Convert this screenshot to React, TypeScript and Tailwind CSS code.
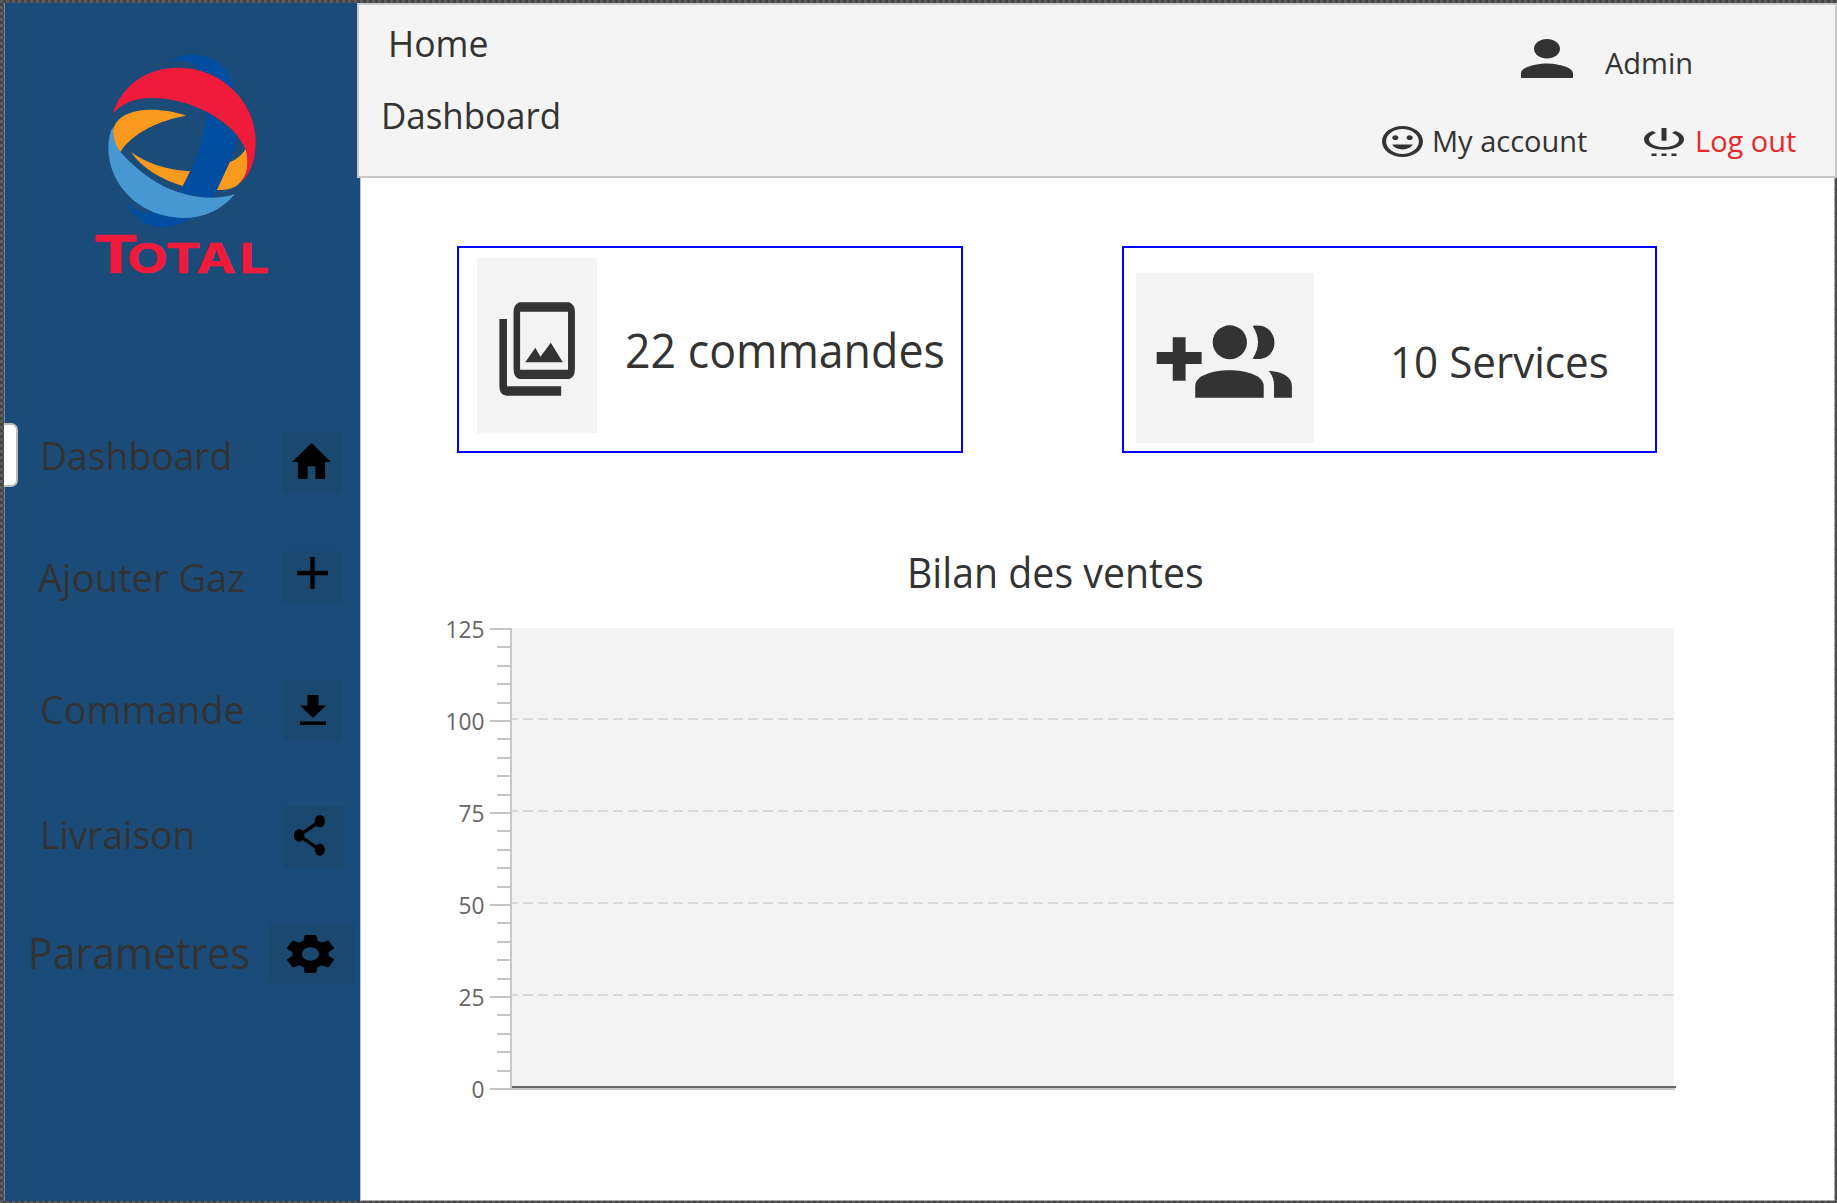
import React from "react";

type IconProps = { d: string; viewBox: string; className: string };

function Icon({ d, viewBox, className }: IconProps) {
  return (
    <svg viewBox={viewBox} preserveAspectRatio="none" className={className} fill="currentColor">
      <path d={d} />
    </svg>
  );
}

const HOME = "M10 20v-6h4v6h5v-8h3L12 3 2 12h3v8z";
const ADD = "M19 13h-6v6h-2v-6H5v-2h6V5h2v6h6v2z";
const DOWNLOAD = "M19 9h-4V3H9v6H5l7 7 7-7zM5 18v2h14v-2H5z";
const SHARE =
  "M18 16.08c-.76 0-1.44.3-1.96.77L8.91 12.7c.05-.23.09-.46.09-.7s-.04-.47-.09-.7l7.05-4.11c.54.5 1.25.81 2.04.81 1.66 0 3-1.34 3-3s-1.34-3-3-3-3 1.34-3 3c0 .24.04.47.09.7L8.04 9.81C7.5 9.31 6.79 9 6 9c-1.66 0-3 1.34-3 3s1.34 3 3 3c.79 0 1.5-.31 2.04-.81l7.12 4.16c-.05.21-.08.43-.08.65 0 1.61 1.31 2.92 2.92 2.92s2.92-1.31 2.92-2.92-1.31-2.92-2.92-2.92z";
const SETTINGS =
  "M19.43 12.98c.04-.32.07-.64.07-.98s-.03-.66-.07-.98l2.11-1.65c.19-.15.24-.42.12-.64l-2-3.46c-.12-.22-.39-.3-.61-.22l-2.49 1c-.52-.4-1.08-.73-1.69-.98l-.38-2.65C14.46 2.18 14.25 2 14 2h-4c-.25 0-.46.18-.49.42l-.38 2.65c-.61.25-1.17.59-1.69.98l-2.49-1c-.23-.09-.49 0-.61.22l-2 3.46c-.13.22-.07.49.12.64l2.11 1.65c-.04.32-.07.65-.07.98s.03.66.07.98l-2.11 1.65c-.19.15-.24.42-.12.64l2 3.46c.12.22.39.3.61.22l2.49-1c.52.4 1.08.73 1.69.98l.38 2.65c.03.24.24.42.49.42h4c.25 0 .46-.18.49-.42l.38-2.65c.61-.25 1.17-.59 1.69-.98l2.49 1c.23.09.49 0 .61-.22l2-3.46c.12-.22.07-.49-.12-.64l-2.11-1.65zM12 15.5c-1.93 0-3.5-1.57-3.5-3.5s1.57-3.5 3.5-3.5 3.5 1.57 3.5 3.5-1.57 3.5-3.5 3.5z";
const PERSON = "M12 12c2.21 0 4-1.79 4-4s-1.79-4-4-4-4 1.79-4 4 1.79 4 4 4zm0 2c-2.67 0-8 1.34-8 4v2h16v-2c0-2.66-5.33-4-8-4z";
const POWER =
  "M7 24h2v-2H7v2zm4 0h2v-2h-2v2zm4 0h2v-2h-2v2zM13 2h-2v10h2V2zm3.56 2.44l-1.45 1.45C16.84 6.94 18 8.83 18 11c0 3.31-2.69 6-6 6s-6-2.69-6-6c0-2.17 1.16-4.06 2.88-5.12L7.44 4.44C5.36 5.88 4 8.28 4 11c0 4.42 3.58 8 8 8s8-3.58 8-8c0-2.72-1.36-5.12-3.44-6.56z";
const SMILE =
  "M11.99 2C6.47 2 2 6.48 2 12s4.47 10 9.99 10C17.52 22 22 17.52 22 12S17.52 2 11.99 2zM12 20c-4.42 0-8-3.58-8-8s3.58-8 8-8 8 3.58 8 8-3.58 8-8 8zm3.5-9c.83 0 1.5-.67 1.5-1.5S16.33 8 15.5 8 14 8.67 14 9.5s.67 1.5 1.5 1.5zm-7 0c.83 0 1.5-.67 1.5-1.5S9.33 8 8.5 8 7 8.67 7 9.5 7.67 11 8.5 11zm-1.5 3c.78 2.04 2.75 3.1 5 3.1s4.22-1.06 5-3.1H7z";

function Logo() {
  return (
    <svg viewBox="0 0 600 750" className="h-[250px] w-[200px]" fontFamily="Inter, sans-serif" fontWeight="700">
      <g fill="#004ea2">
        <path d="M265 65C300 38 365 38 402 60C440 82 455 115 462 150L360 90C340 62 300 55 265 65z" />
        <path d="M141 484C160 515 185 520 220 518L332 534C290 566 230 570 190 546C160 528 146 508 141 484z" />
      </g>
      <path
        fill="#f9991d"
        d="M121 336C90 300 88 255 130 228C180 200 260 207 318 227C240 240 155 280 121 336zM153 336C195 368 260 390 330 394L308 438C250 420 190 390 153 336zM410 450L449 366C470 358 488 343 497 326C512 370 500 420 465 440C450 448 430 450 410 450z"
      />
      <path fill="#004ea2" d="M380 215C372 300 338 400 296 458L400 475C412 445 450 365 449 366C460 340 468 312 470 285z" />
      <path
        fill="#f01a3b"
        d="M98 222C122 145 190 83 295 83C425 83 527 185 527 305C527 365 508 410 478 430C502 410 507 372 498 330C480 290 450 252 380 215C330 190 290 180 250 176C190 170 135 178 98 222z"
      />
      <path
        fill="#4797d3"
        d="M98 260C100 295 106 315 121 336C180 400 240 440 296 457C350 474 410 480 465 462C425 510 370 534 312 534C185 534 85 440 85 322C85 300 90 277 98 260z"
      />
      <text
        transform="translate(0 699) scale(1.3 1)"
        x="31 109 198 269 368"
        fill="#f01a3b"
        stroke="#f01a3b"
        strokeWidth="2"
        strokeLinejoin="round"
        fontSize="121"
      >
        <tspan fontSize="156">T</tspan>OTAL
      </text>
    </svg>
  );
}

const NAV = [
  { label: "Dashboard", d: HOME, vb: "2 3 20 17", icon: "h-[36px] w-[39px] mt-[10px] ml-[10px]", row: "h-[60px] pl-[36px]", text: "w-[242px] pt-[2px] text-[39px]", fit: "scale-x-[0.956]", tile: "w-[60px]" },
  { label: "Ajouter Gaz", d: ADD, vb: "5 5 14 14", icon: "h-[32px] w-[31px] mt-[6px] ml-[15px]", row: "mt-[58px] h-[52px] pl-[34px]", text: "w-[244px] pt-[6px] text-[39px]", fit: "scale-x-[0.977]", tile: "w-[60px]" },
  { label: "Commande", d: DOWNLOAD, vb: "5 3 14 17", icon: "h-[30px] w-[26px] mt-[14px] ml-[16px]", row: "mt-[78px] h-[60px] pl-[36px]", text: "w-[244px] pt-[8px] text-[39px]", fit: "scale-x-[0.968]", tile: "w-[58px]" },
  { label: "Livraison", d: SHARE, vb: "3 2 18 20", icon: "h-[41px] w-[31px] mt-[9px] ml-[10px]", row: "mt-[65px] h-[62px] pl-[36px]", text: "w-[244px] pt-[8px] text-[39px]", fit: "scale-x-[0.952]", tile: "w-[60px]" },
  { label: "Parametres", d: SETTINGS, vb: "2.27 2 19.46 20", icon: "h-[38px] w-[47px] mt-[12px] ml-[18px]", row: "mt-[55px] h-[60px] pl-[24px]", text: "w-[241px] pt-[7px] text-[44px]", fit: "scale-x-[0.932]", tile: "w-[85px]" },
];

function Sidebar() {
  return (
    <aside className="relative flex w-[357px] shrink-0 flex-col border-r border-[#b9c6d3] bg-[#1b4b79] shadow-[inset_1px_0_0_#6b86a0]">
      <div className="mt-[37px] ml-[76px] h-[250px]">
        <Logo />
      </div>
      <nav className="mt-[143px]">
        {NAV.map((n) => (
          <div key={n.label} className={`flex leading-none text-[#333333] ${n.row}`}>
            <span className={`shrink-0 whitespace-nowrap ${n.text}`}>
              <span className={`inline-block origin-left ${n.fit}`}>{n.label}</span>
            </span>
            <span className={`h-full shrink-0 bg-[#1b486f] text-black ${n.tile}`}>
              <Icon d={n.d} viewBox={n.vb} className={n.icon} />
            </span>
          </div>
        ))}
      </nav>
      <div className="absolute top-[420px] left-0 h-[64px] w-[14px] rounded-r-[7px] border-2 border-l-0 border-[#bdbdbd] bg-white" />
    </aside>
  );
}

function Header() {
  return (
    <header className="relative -mr-[3px] -ml-[4px] flex h-[175px] justify-between border-2 border-[#c8c8c8] bg-[#f4f4f4] leading-none text-[#333333]">
      <div className="flex flex-col items-start pt-[19px] pl-[22px] text-[37px]">
        <span className="ml-[7px] origin-left scale-x-[0.96]">Home</span>
        <span className="mt-[35px] origin-left scale-x-[0.943]">Dashboard</span>
      </div>
      <div className="w-[456px] text-[29px]">
        <div className="flex h-[121px] pl-[142px]">
          <Icon d={PERSON} viewBox="4 4 16 16" className="mt-[34px] h-[39px] w-[52px]" />
          <span className="mt-[43px] ml-[32px]">Admin</span>
        </div>
        <div className="flex pl-[3px]">
          <Icon d={SMILE} viewBox="2 2 20 20" className="h-[31px] w-[41px]" />
          <span className="ml-[9px] w-[212px] shrink-0 whitespace-nowrap">My account</span>
          <Icon d={POWER} viewBox="4 2 16 22" className="mt-[2px] h-[28px] w-[40px]" />
          <span className="ml-[11px] origin-left whitespace-nowrap text-[#e8282a]">Log out</span>
        </div>
      </div>
    </header>
  );
}

function Cards() {
  return (
    <section className="mt-[68px] flex pl-[96px] leading-none text-[#333333]">
      <div className="flex h-[207px] w-[506px] border-2 border-[#0000ff] pt-[10px] pl-[18px]">
        <div className="h-[175px] w-[120px] shrink-0 bg-[#f3f3f3]">
          <svg viewBox="107 84 348 525" preserveAspectRatio="none" className="h-full w-full" fill="#333333">
            <path d="M172 267h22v202h157v28H192q-20-2-20-28z" />
            <path fillRule="evenodd" d="M230 217H374q17 6 17 30V417q0 24-17 30H230q-17-6-17-30V247q0-24 17-30zM232 245V419H371V245z" />
            <path d="M247 397L276 353L291 380L321 338L356 397z" />
          </svg>
        </div>
        <span className="mt-[69px] ml-[28px] origin-left scale-x-[0.951] self-start text-[47px] whitespace-nowrap">22 commandes</span>
      </div>
      <div className="ml-[159px] flex h-[207px] w-[535px] border-2 border-[#0000ff] pt-[25px] pl-[12px]">
        <div className="h-[170px] w-[178px] shrink-0 bg-[#f3f3f3]">
          <svg viewBox="74 129 499 510" preserveAspectRatio="none" className="h-full w-full" fill="#333333">
            <path d="M177 322h36v44h45v36h-45v50h-36v-50h-45v-36h45z" />
            <ellipse cx="337" cy="337" rx="48" ry="51" />
            <path d="M401 288C480 272 485 402 401 386Q431 337 401 288z" />
            <path d="M240 503V467C242 405 430 405 432 467V503z" />
            <path d="M446 423C480 423 511 440 511 467V503H461V467Q461 440 446 423z" />
          </svg>
        </div>
        <span className="mt-[66px] ml-[76px] origin-left scale-x-[0.958] self-start text-[44px] whitespace-nowrap">10 Services</span>
      </div>
    </section>
  );
}

const MAJOR = [125, 100, 75, 50, 25, 0];

function Chart() {
  return (
    <section className="text-[#333333]">
      <h2 className="mt-[98px] ml-[546px] h-[42px] w-[318px] origin-left scale-x-[0.935] text-[42px] leading-none font-normal whitespace-nowrap">
        Bilan des ventes
      </h2>
      <svg viewBox="440 610 1240 490" className="mt-[17px] ml-[79px] h-[490px] w-[1240px]" shapeRendering="crispEdges">
        <rect x="512" y="628" width="1162" height="460" fill="#f3f3f3" />
        {[719, 811, 903, 995].map((y) => (
          <line key={y} x1="512" x2="1674" y1={y} y2={y} stroke="#dadada" strokeWidth="2" strokeDasharray="10 5" strokeDashoffset="4" />
        ))}
        {Array.from({ length: 26 }, (_, i) => {
          const y = Math.round(628 + i * 18.4);
          return <rect key={i} x={i % 5 ? 497 : 490} y={y} width={i % 5 ? 14 : 21} height="2" fill="#c4c4c4" />;
        })}
        <rect x="510" y="628" width="2" height="462" fill="#c8c8c8" />
        <rect x="512" y="1088" width="1163" height="2" fill="#c8c8c8" />
        <rect x="512" y="1086" width="1164" height="2" fill="#666666" />
        {MAJOR.map((v, i) => (
          <text key={v} x="484.5" y={637.5 + i * 92} textAnchor="end" fontSize="24" textLength={v > 99 ? 39 : v ? 26 : 13} lengthAdjust="spacingAndGlyphs" fill="#666666">
            {v}
          </text>
        ))}
      </svg>
    </section>
  );
}

export default function App() {
  return (
    <div className="h-[1203px] w-[1837px] overflow-hidden bg-[#505050] bg-[repeating-conic-gradient(#454545_0%_25%,#5c5c5c_0%_50%)] bg-[length:6px_6px] pt-[3px] pr-[2px] pb-[2px] pl-1 font-['Open_Sans',sans-serif]">
      <div className="flex h-full">
        <Sidebar />
        <main className="min-w-0 flex-1 border-r border-b border-[#aaaaaa] bg-white">
          <Header />
          <Cards />
          <Chart />
        </main>
      </div>
    </div>
  );
}
